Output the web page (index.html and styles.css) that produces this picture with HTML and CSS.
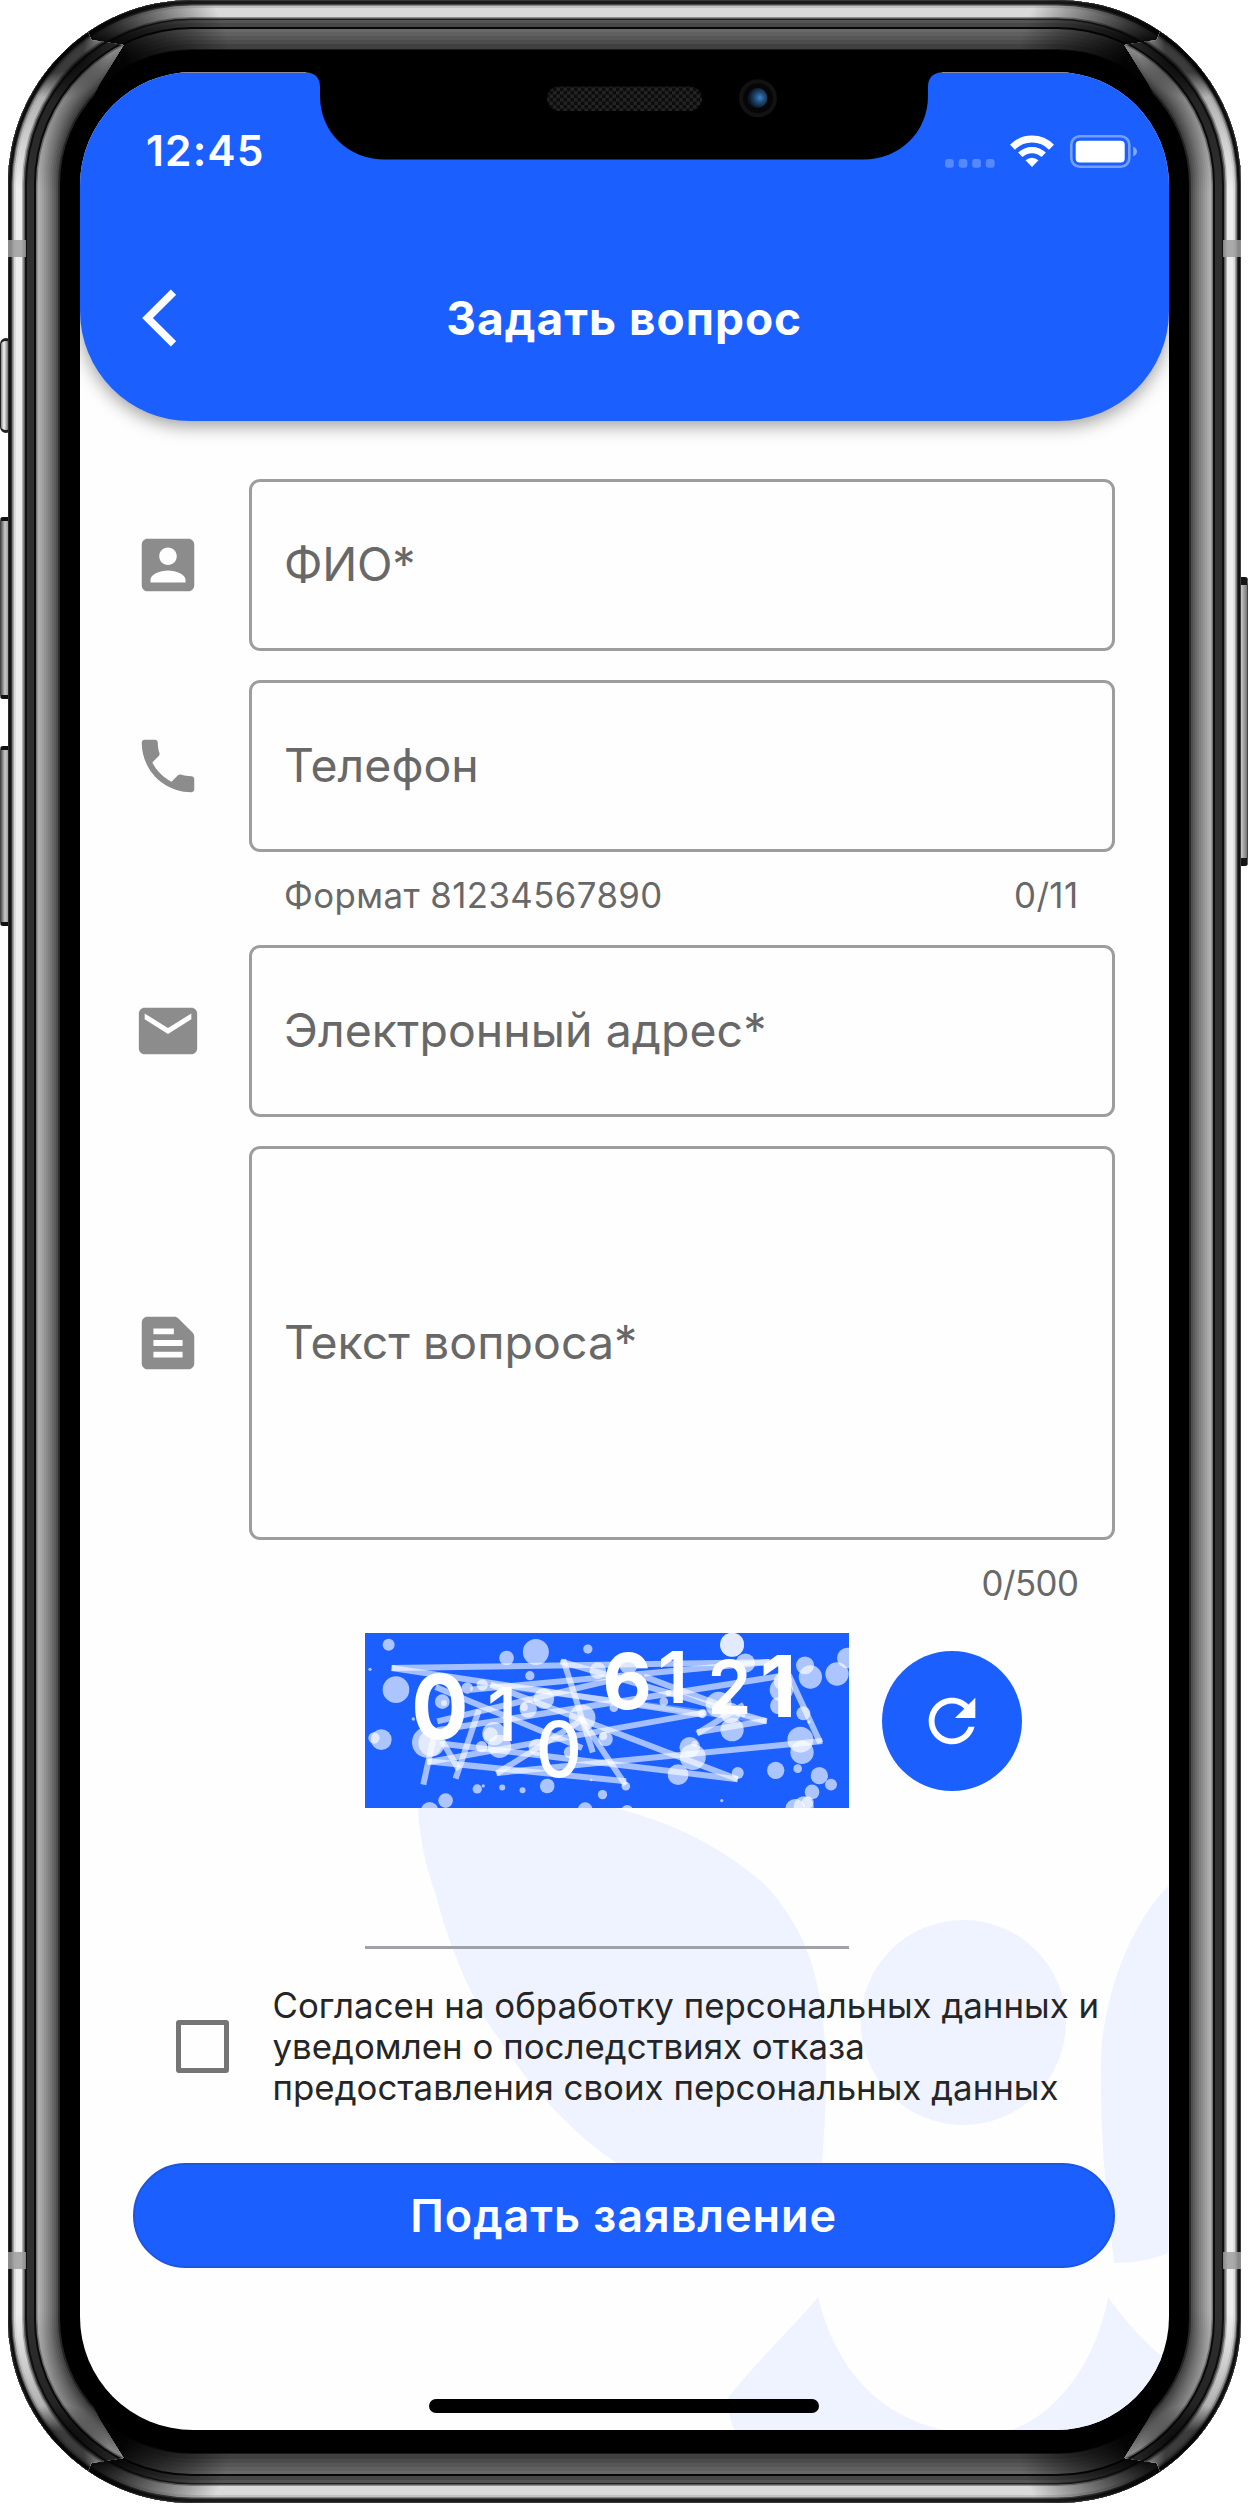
FILE: index.html
```html
<!DOCTYPE html>
<html lang="ru">
<head>
<meta charset="utf-8">
<title>Задать вопрос</title>
<link rel="stylesheet" href="styles.css">
</head>
<body>
<div class="phone">
  <i class="key key-mute"></i><i class="key key-up"></i><i class="key key-down"></i><i class="key key-power"></i>
  <div class="shell shell-ends"></div>
  <div class="shell shell-sides"></div>
  <i class="band band-tl"></i><i class="band band-tr"></i><i class="band band-bl"></i><i class="band band-br"></i>

  <main class="screen">
    <svg class="butterfly" viewBox="80 72 1088 2358" fill="#eef3ff">
      <path d="M417 1790C417 1830 426 1870 436 1895C446 1940 475 2010 500 2040C530 2090 580 2140 617 2163V2200H820C822 2150 828 2090 825 2050C822 1990 812 1935 764 1884C720 1845 660 1815 590 1803Z"/>
      <circle cx="963" cy="2022.500" r="102.500"/>
      <path d="M1168 1886C1130 1925 1106 1990 1101 2050C1099 2110 1104 2190 1114 2263C1135 2263 1150 2260 1168 2253Z"/>
      <path d="M818 2297C790 2330 752 2366 727 2399Q728 2415 734 2430H943C880 2416 835 2370 818 2297Z"/>
      <path d="M1108 2297C1095 2365 1055 2415 1011 2430H1168V2362Q1130 2330 1108 2297Z"/>
    </svg>

    <header class="header">
      <div class="status">
        <span class="time">12:45</span>
        <div class="indicators">
          <svg width="50" height="9" viewBox="0 0 50 9" fill="#fff" opacity=".26"><rect width="8.800" height="8.800" rx="3"/><rect x="13.600" width="8.800" height="8.800" rx="3"/><rect x="27.200" width="8.800" height="8.800" rx="3"/><rect x="40.800" width="8.800" height="8.800" rx="3"/></svg>
          <svg class="wifi" width="44" height="33" viewBox="0 0 44 33" fill="none" stroke="#fff"><path d="M2.500 12.200A27.500 27.500 0 0 1 41.500 12.200" stroke-width="7"/><path d="M10.300 19.800A16.800 16.800 0 0 1 33.700 19.800" stroke-width="6.200"/><path d="M22 32L15.500 25.300Q22 20.300 28.500 25.300Z" fill="#fff" stroke="none"/></svg>
          <svg class="battery" width="68" height="33" viewBox="0 0 68 33"><rect x="1.300" y="1.300" width="58" height="30.400" rx="8.500" fill="none" stroke="#fff" stroke-opacity=".4" stroke-width="2.600"/><rect x="5.700" y="5.700" width="49" height="21.800" rx="4" fill="#fff"/><path d="M63.200 11.500Q67 13.500 67 16.500T63.200 21.500Z" fill="#fff" fill-opacity=".45"/></svg>
        </div>
      </div>
      <div class="title-row">
        <svg class="back" width="36" height="60" viewBox="0 0 36 60" fill="none" stroke="#fff" stroke-width="7.500"><path d="M33.500 4.200L7.500 30L33.500 55.800"/></svg>
        <h1>Задать вопрос</h1>
      </div>
    </header>

    <form class="form">
      <div class="row">
        <svg class="icon" viewBox="0 0 24 24"><path d="M3 5v14c0 1.100.89 2 2 2h14c1.100 0 2-.9 2-2V5c0-1.100-.9-2-2-2H5c-1.110 0-2 .9-2 2zm12 4c0 1.660-1.340 3-3 3s-3-1.340-3-3 1.340-3 3-3 3 1.340 3 3zm-9 8c0-2 4-3.100 6-3.100s6 1.100 6 3.100v1H6v-1z"/></svg>
        <div class="field"><span class="l-name">ФИО*</span></div>
      </div>
      <div class="row">
        <svg class="icon" viewBox="0 0 24 24"><path d="M6.620 10.790c1.440 2.830 3.760 5.140 6.590 6.590l2.200-2.200c.27-.27.67-.36 1.020-.24 1.120.37 2.330.57 3.570.57.55 0 1 .45 1 1V20c0 .55-.45 1-1 1-9.390 0-17-7.610-17-17 0-.55.45-1 1-1h3.500c.55 0 1 .45 1 1 0 1.250.2 2.450.57 3.570.11.35.03.74-.25 1.020l-2.200 2.200z"/></svg>
        <div class="field"><span>Телефон</span></div>
      </div>
      <div class="hint"><span class="l-format">Формат 81234567890</span><span class="l-format">0/11</span></div>
      <div class="row">
        <svg class="icon" viewBox="0 0 24 24"><path d="M20 4H4c-1.100 0-1.990.9-1.990 2L2 18c0 1.100.9 2 2 2h16c1.100 0 2-.9 2-2V6c0-1.100-.9-2-2-2zm0 4l-8 5-8-5V6l8 5 8-5v2z"/></svg>
        <div class="field"><span>Электронный адрес*</span></div>
      </div>
      <div class="row">
        <svg class="icon" viewBox="0 0 24 24"><path d="M20.410 8.410l-4.830-4.830C15.210 3.210 14.700 3 14.170 3H5C3.900 3 3 3.900 3 5v14c0 1.100.9 2 2 2h14c1.100 0 2-.9 2-2V9.830C21 9.300 20.790 8.790 20.410 8.410zM7 7h7v2H7V7zM17 17H7v-2h10V17zM17 13H7v-2h10V13z"/></svg>
        <div class="field field-tall"><span>Текст вопроса*</span></div>
      </div>
      <div class="hint hint-end"><span class="l-count">0/500</span></div>

      <div class="captcha-row">
        <svg class="captcha" viewBox="13 20 1453 525">
          <g stroke="#fff" stroke-opacity=".6" stroke-width="18">
            <path d="M93 125L1228 107"/><path d="M93 125L1030 265"/><path d="M608 100L697 378"/><path d="M600 105L1219 285"/><path d="M390 175L1215 283" stroke-opacity=".3"/><path d="M390 175L1132 459"/><path d="M225 182L665 365"/><path d="M658 270L795 476"/><path d="M355 250L285 457"/><path d="M220 330L188 475"/><path d="M245 345L295 430"/><path d="M200 405L797 465"/><path d="M245 352L1132 459"/><path d="M408 442L665 280"/><path d="M408 440L1386 344"/><path d="M1285 145L1380 350"/><path d="M1285 145L230 312"/><path d="M200 408L1035 258"/><path d="M1228 107L330 190"/><path d="M230 285L800 150"/><path d="M1010 322L1150 235"/><path d="M1010 318L1219 283"/><path d="M850 150L1155 265"/>
          </g>
          <g fill="#fff" fill-opacity=".64">
            <circle cx="84" cy="55" r="18"/><circle cx="526" cy="77" r="39"/><circle cx="438" cy="95" r="22"/><circle cx="682" cy="68" r="14"/><circle cx="28" cy="129" r="5"/><circle cx="508" cy="148" r="14"/><circle cx="106" cy="190" r="40"/><circle cx="365" cy="176" r="17"/><circle cx="320" cy="185" r="17"/><circle cx="245" cy="226" r="22"/><circle cx="250" cy="230" r="9"/><circle cx="158" cy="278" r="5"/><circle cx="62" cy="340" r="31"/><circle cx="40" cy="335" r="17"/><circle cx="200" cy="348" r="46"/><circle cx="213" cy="350" r="40"/><circle cx="550" cy="217" r="31"/><circle cx="503" cy="248" r="26"/><circle cx="490" cy="243" r="12"/><circle cx="665" cy="275" r="40"/><circle cx="400" cy="322" r="35"/><circle cx="390" cy="325" r="22"/><circle cx="417" cy="360" r="35"/><circle cx="363" cy="361" r="17"/><circle cx="530" cy="363" r="26"/><circle cx="628" cy="378" r="18"/><circle cx="712" cy="133" r="25"/><circle cx="735" cy="338" r="22"/><circle cx="728" cy="330" r="12"/><circle cx="350" cy="488" r="14"/><circle cx="368" cy="479" r="5"/><circle cx="425" cy="484" r="9"/><circle cx="486" cy="492" r="9"/><circle cx="560" cy="479" r="22"/><circle cx="726" cy="505" r="14"/><circle cx="255" cy="523" r="22"/><circle cx="207" cy="553" r="26"/><circle cx="674" cy="550" r="22"/><circle cx="692" cy="461" r="4"/>
            <circle cx="1115" cy="55" r="36"/><circle cx="1115" cy="55" r="36"/><circle cx="1155" cy="110" r="29"/><circle cx="1334" cy="117" r="27"/><circle cx="1350" cy="152" r="35"/><circle cx="1430" cy="143" r="35"/><circle cx="1461" cy="95" r="31"/><circle cx="1263" cy="190" r="35"/><circle cx="1268" cy="165" r="28"/><circle cx="1255" cy="238" r="26"/><circle cx="1329" cy="261" r="21"/><circle cx="1346" cy="287" r="5"/><circle cx="1075" cy="235" r="39"/><circle cx="1110" cy="260" r="31"/><circle cx="1115" cy="310" r="35"/><circle cx="988" cy="363" r="31"/><circle cx="997" cy="392" r="39"/><circle cx="1002" cy="352" r="9"/><circle cx="953" cy="445" r="31"/><circle cx="1132" cy="440" r="18"/><circle cx="1320" cy="340" r="39"/><circle cx="1325" cy="378" r="35"/><circle cx="1246" cy="432" r="26"/><circle cx="1312" cy="427" r="13"/><circle cx="1377" cy="448" r="26"/><circle cx="1412" cy="475" r="18"/><circle cx="1355" cy="497" r="22"/><circle cx="796" cy="480" r="13"/><circle cx="1084" cy="523" r="5"/><circle cx="1305" cy="548" r="30"/><circle cx="1330" cy="540" r="30"/><circle cx="1342" cy="528" r="18"/><circle cx="804" cy="115" r="28"/><circle cx="910" cy="226" r="13"/><circle cx="760" cy="244" r="13"/><circle cx="800" cy="554" r="18"/><circle cx="924" cy="200" r="9"/><circle cx="1026" cy="262" r="13"/>
          </g>
          <g class="digits" text-anchor="middle">
            <text x="238" y="337" font-size="270" font-weight="700" textLength="172" lengthAdjust="spacingAndGlyphs">0</text>
            <text x="425" y="343" font-size="221" font-weight="500">1</text>
            <text x="595" y="451" font-size="233" font-weight="500" textLength="139" lengthAdjust="spacingAndGlyphs">0</text>
            <text x="800" y="248" font-size="233" font-weight="700" textLength="148" lengthAdjust="spacingAndGlyphs">6</text>
            <text x="937" y="231" font-size="215" font-weight="600">1</text>
            <text x="1107" y="264" font-size="222" font-weight="600" textLength="132" lengthAdjust="spacingAndGlyphs">2</text>
            <text x="1253" y="273" font-size="256" font-weight="700">1</text>
          </g>
        </svg>
        <button class="reload" type="button" aria-label="Обновить"><svg viewBox="0 0 24 24" fill="#fff"><path d="M17.650 6.350C16.200 4.900 14.210 4 12 4c-4.420 0-7.990 3.580-7.990 8s3.570 8 7.990 8c3.730 0 6.840-2.550 7.730-6h-2.080c-.82 2.330-3.040 4-5.650 4-3.310 0-6-2.690-6-6s2.690-6 6-6c1.660 0 3.140.69 4.220 1.780L13 11h7V4l-2.350 2.350z"/></svg></button>
      </div>
      <div class="answer"></div>

      <label class="consent">
        <i class="box"></i>
        <span class="consent-text"><span>Согласен на обработку персональных данных и</span><span>уведомлен о последствиях отказа</span><span>предоставления своих персональных данных</span></span>
      </label>
      <button class="submit" type="button">Подать заявление</button>
    </form>
    <i class="home"></i>
  </main>

  <svg class="notch" width="636" height="90" viewBox="306 71 636 90">
    <defs>
      <pattern id="mesh" width="7" height="7" patternUnits="userSpaceOnUse"><rect width="7" height="7" fill="#0c0c0c"/><path d="M0 0h3.500v3.500H0zM3.500 3.500H7V7H3.500z" fill="#232323"/></pattern>
      <radialGradient id="lens" cx=".62" cy=".48" r=".55"><stop offset="0" stop-color="#3a86cc"/><stop offset=".4" stop-color="#24507f"/><stop offset="1" stop-color="#0a1526"/></radialGradient>
    </defs>
    <path d="M306 71V72.500C316 72.500 320 79 320 87V96C320 132 348 159.500 385 159.500H863C900 159.500 928 132 928 96V87C928 79 932 72.500 942 72.500V71Z"/>
    <rect x="547" y="86.500" width="155" height="24.500" rx="12.200" fill="url(#mesh)"/>
    <circle cx="758" cy="98.300" r="17" fill="#060606" stroke="#121212" stroke-width="4"/>
    <circle cx="757.500" cy="98" r="10" fill="url(#lens)"/>
  </svg>
</div>
</body>
</html>
```
FILE: styles.css
```css
* { box-sizing: border-box; }
body { margin: 0; background: #fff; font-family: Inter, "Liberation Sans", sans-serif; }
.phone { position: relative; width: 1248px; height: 2508px; padding: 72px 79.5px 78px 80px; overflow: hidden; }

/* device body */
.shell { position: absolute; left: 7.5px; top: 0; width: 1233px; height: 2503px; border-radius: 184px; background: #000; overflow: hidden; }
.shell-ends {
  box-shadow: inset 0 0 0 1px #3a3a3a, inset 0 0 0 4px #1b1b1b, inset 0 0 0 5.5px #4a4a4a,
    inset 0 0 0 8px #c2c2c2, inset 0 0 0 17px #dadada, inset 0 0 0 18.5px #8e8e8e, inset 0 0 0 20px #222,
    inset 0 0 0 23px #545454, inset 0 0 0 27px #484848, inset 0 0 0 29px #080808,
    inset 0 0 0 32px #686868, inset 0 0 0 36px #606060, inset 0 0 0 40px #565656, inset 0 0 0 44px #4c4c4c, inset 0 0 0 49px #404040, inset 0 0 0 50px #1a1a1a;
}
.shell-ends::after { content: ""; position: absolute; inset: 0; background:
  radial-gradient(circle at 85px 75px, rgba(0,0,0,.95) 35px, transparent 140px),
  radial-gradient(circle at 1148px 75px, rgba(0,0,0,.95) 35px, transparent 140px),
  radial-gradient(circle at 85px 2428px, rgba(0,0,0,.95) 35px, transparent 140px),
  radial-gradient(circle at 1148px 2428px, rgba(0,0,0,.95) 35px, transparent 140px); }
.shell-sides {
  clip-path: path("M0 0L66 0L84 40L116 45L92 84L62 150L75 300V2200L62 2353L92 2419L116 2458L84 2463L66 2503L0 2503ZM1233 0L1167 0L1149 40L1117 45L1141 84L1171 150L1158 300V2200L1171 2353L1141 2419L1117 2458L1149 2463L1167 2503L1233 2503Z");
  box-shadow: inset 0 0 0 1px #2c2c2c, inset 0 0 0 3.5px #111, inset 0 0 0 4.5px #555, inset 0 0 0 6px #a2a2a2,
    inset 0 0 0 8px #dcdcdc, inset 0 0 0 14px #ededed, inset 0 0 0 15.5px #b0b0b0, inset 0 0 0 17px #5c5c5c, inset 0 0 0 19px #101010,
    inset 0 0 0 26px #303030, inset 0 0 0 28px #0b0b0b, inset 0 0 0 29.5px #777, inset 0 0 0 32px #b0b0b0,
    inset 0 0 0 34px #a8a8a8, inset 0 0 0 36px #9e9e9e, inset 0 0 0 38px #949494, inset 0 0 0 40px #8a8a8a, inset 0 0 0 42px #808080,
    inset 0 0 0 44px #747474, inset 0 0 0 46px #686868, inset 0 0 0 48px #5c5c5c, inset 0 0 0 50px #4e4e4e, inset 0 0 0 52px #2a2a2a;
}
.shell-sides::after { content: ""; position: absolute; inset: 0; background:
  radial-gradient(circle at 48px 44px, rgba(0,0,0,.75) 28px, rgba(0,0,0,.25) 55px, transparent 150px),
  radial-gradient(circle at 1185px 44px, rgba(0,0,0,.75) 28px, rgba(0,0,0,.25) 55px, transparent 150px),
  radial-gradient(circle at 48px 2459px, rgba(0,0,0,.75) 28px, rgba(0,0,0,.25) 55px, transparent 150px),
  radial-gradient(circle at 1185px 2459px, rgba(0,0,0,.75) 28px, rgba(0,0,0,.25) 55px, transparent 150px); }
.key { position: absolute; border: 1px solid #222; background: linear-gradient(90deg, #555, #c8c8c8 40%, #777); }
.key-mute { left: 0; top: 338px; width: 12px; height: 95px; border-radius: 6px; border-width: 3px 1px; background: linear-gradient(90deg, #888, #f4f4f4 30%, #555 80%); }
.key-up, .key-down { left: 0; width: 12px; border-radius: 3px; border-width: 4px 1px; border-color: #111 #444; }
.key-up { top: 517px; height: 182px; }
.key-down { top: 746px; height: 180px; }
.key-power { right: 0; top: 577px; width: 12px; height: 289px; border-radius: 3px; border-width: 8px 1px; border-color: #151515 #444; }
.band { position: absolute; width: 18px; height: 17px; background: #9d9d9d; opacity: .85; }
.band-tl { left: 7.5px; top: 240px; }
.band-tr { right: 7.5px; top: 240px; }
.band-bl { left: 7.5px; top: 2252px; }
.band-br { right: 7.5px; top: 2252px; }
.notch { position: absolute; left: 306px; top: 71px; }

/* app */
.screen { position: relative; display: flex; flex-direction: column; height: 2358px; background: #fefefe; border-radius: 113px; overflow: hidden; }
.butterfly { position: absolute; left: 0; top: 0; width: 100%; height: 100%; }
.header { position: relative; height: 349px; flex: none; background: #1b60ff; color: #fff; border-radius: 0 0 110px 110px; box-shadow: 0 5px 18px rgba(0,0,0,.38); border-top: 1px solid #8d8b98; }
.status { display: flex; justify-content: space-between; align-items: flex-end; height: 95px; padding: 0 31px 0 66px; }
.time { font-size: 42.5px; line-height: 52px; font-weight: 560; letter-spacing: 1.1px; margin-bottom: -9px; }
.indicators { display: flex; align-items: flex-end; }
.wifi { margin-left: 15px; }
.battery { margin-left: 16px; }
.title-row { display: flex; align-items: center; height: 60px; margin-top: 120px; padding: 0 60px; }
.back { flex: none; }
h1 { flex: 1; margin: 0 36px 0 0; text-align: center; font-size: 46px; line-height: 60px; font-weight: 700; letter-spacing: 1px; }
.form { position: relative; display: flex; flex-direction: column; padding: 58px 54px 0 52px; }
.row { display: grid; grid-template-columns: 117px 1fr; align-items: center; margin-bottom: 29px; }
.icon { width: 70px; height: 70px; margin-left: .7px; fill: #8c8c8c; }
.field { height: 172px; border: 3px solid #9d9d9d; border-radius: 11px; padding: 0 0 3px 32px; display: flex; align-items: center; font-size: 46.4px; font-weight: 370; color: #686868; white-space: nowrap; }
.field span { letter-spacing: .07px; }
.field .l-name { letter-spacing: -.2px; }
.field-tall { height: 394px; }
.hint { display: flex; justify-content: space-between; margin: -29px 36px 0 152px; height: 93px; padding-top: 21.5px; font-size: 34.8px; line-height: 42px; font-weight: 370; color: #686868; }
.l-format { letter-spacing: .42px; }
.l-count { letter-spacing: -.5px; }
.hint-end { justify-content: flex-end; }
.captcha-row { display: flex; align-items: center; padding-left: 232.5px; gap: 33.5px; height: 175px; }
.captcha { width: 484px; height: 175px; background: #1b60ff; flex: none; }
.digits { fill: #fff; font-family: Inter, sans-serif; }
.reload { width: 140px; height: 140px; border: 0; border-radius: 50%; background: #1b60ff; display: grid; place-items: center; padding: 0; flex: none; }
.reload svg { width: 70px; height: 70px; }
.answer { width: 484px; height: 141px; margin-left: 232.5px; border-bottom: 3px solid #a0a2a8; }
.consent { display: flex; align-items: center; height: 123px; margin-top: 36px; padding-left: 44px; }
.box { width: 53px; height: 53px; border: 5px solid #757575; border-radius: 3px; margin-right: 43.5px; flex: none; }
.consent-text { display: flex; flex-direction: column; font-size: 34.8px; line-height: 41px; font-weight: 370; letter-spacing: .03px; color: #252525; white-space: nowrap; }
.submit { margin: 55px 0 0 1px; height: 105px; border: 2px solid #1c56e0; border-radius: 53px; background: #1b60ff; color: #fff; font: 570 45px/60px Inter, sans-serif; letter-spacing: .95px; }
.home { position: absolute; left: 349px; top: 2327px; width: 390px; height: 14px; border-radius: 7px; background: #000; }
```
